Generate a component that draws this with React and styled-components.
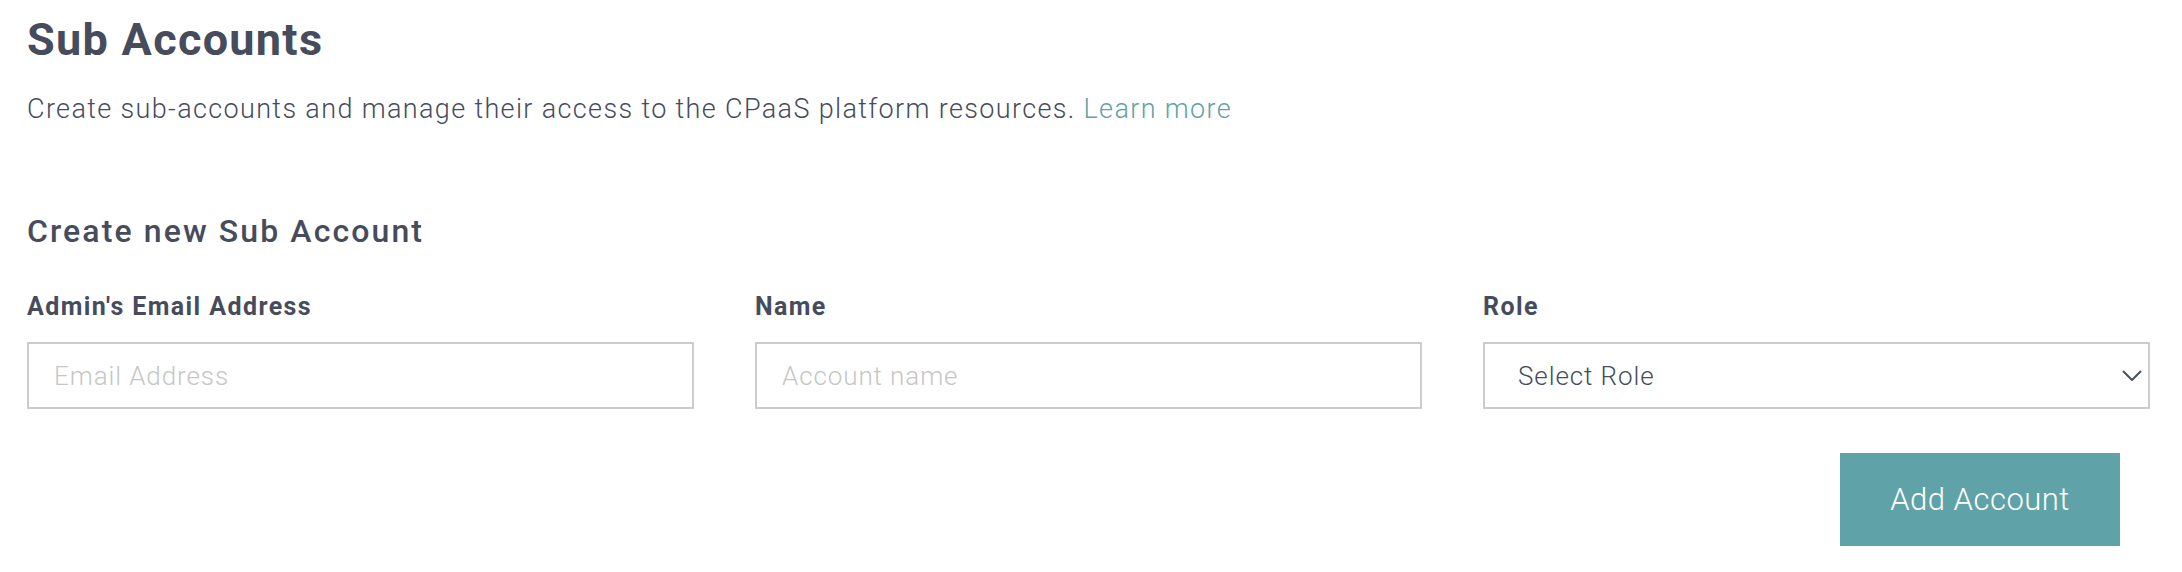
import React from "react";
import styled, { createGlobalStyle } from "styled-components";

const GlobalStyle = createGlobalStyle`
  html, body {
    margin: 0;
    padding: 0;
    background: #ffffff;
  }
  body {
    font-family: Roboto, "Liberation Sans", Arial, sans-serif;
    color: #464c5c;
  }
  * { box-sizing: border-box; }
`;

const Page = styled.main`
  padding: 14px 32px 0 27px;
`;

const Title = styled.h1`
  margin: 0;
  font-size: 45px;
  line-height: 52px;
  font-weight: 700;
  letter-spacing: 1.3px;
  color: #464c5c;
`;

const Intro = styled.p`
  margin: 27px 0 0;
  font-size: 27px;
  line-height: 32px;
  font-weight: 300;
  letter-spacing: 1.35px;
  color: #464c5c;
`;

const Link = styled.a`
  color: #5fa3a8;
  text-decoration: none;
`;

const SectionTitle = styled.h2`
  margin: 86px 0 0;
  font-size: 32px;
  line-height: 40px;
  font-weight: 500;
  letter-spacing: 2.1px;
  color: #464c5c;
`;

const Fields = styled.div`
  display: grid;
  grid-template-columns: repeat(3, 1fr);
  column-gap: 61px;
  margin-top: 41px;
`;

const Field = styled.label`
  display: flex;
  flex-direction: column;
  gap: 20px;
`;

const FieldLabel = styled.span`
  font-size: 25px;
  line-height: 30px;
  font-weight: 700;
  letter-spacing: 1.4px;
  color: #464c5c;
`;

const controlBase = `
  height: 67px;
  width: 100%;
  border: 2px solid #cccccc;
  border-radius: 0;
  font-family: Roboto, "Liberation Sans", Arial, sans-serif;
  font-size: 26px;
  font-weight: 300;
  letter-spacing: 0.9px;
  color: #464c5c;
  background: #fff;
  outline: none;
`;

const TextInput = styled.input`
  ${controlBase}
  padding: 0 25px;
  &::placeholder {
    color: #c6c6c6;
  }
`;

const SelectWrap = styled.div`
  position: relative;
  width: 100%;
`;

const Select = styled.select`
  ${controlBase}
  appearance: none;
  -webkit-appearance: none;
  padding: 0 40px 0 33px;
`;

const Chevron = styled.svg`
  position: absolute;
  right: 8px;
  top: 50%;
  transform: translateY(-50%);
  pointer-events: none;
`;

const Actions = styled.div`
  display: flex;
  justify-content: flex-end;
  margin-top: 44px;
  padding-right: 30px;
`;

const Button = styled.button`
  width: 280px;
  height: 93px;
  border: none;
  border-radius: 0;
  background: #5fa3a8;
  color: #ffffff;
  font-family: Roboto, "Liberation Sans", Arial, sans-serif;
  font-size: 31px;
  font-weight: 300;
  letter-spacing: 0.5px;
  cursor: pointer;
`;

export default function App() {
  return (
    <>
      <GlobalStyle />
      <Page>
        <Title>Sub Accounts</Title>
        <Intro>
          Create sub-accounts and manage their access to the CPaaS platform resources.{" "}
          <Link href="#">Learn more</Link>
        </Intro>
        <SectionTitle>Create new Sub Account</SectionTitle>
        <Fields>
          <Field>
            <FieldLabel>Admin's Email Address</FieldLabel>
            <TextInput type="email" placeholder="Email Address" />
          </Field>
          <Field>
            <FieldLabel>Name</FieldLabel>
            <TextInput type="text" placeholder="Account name" />
          </Field>
          <Field>
            <FieldLabel>Role</FieldLabel>
            <SelectWrap>
              <Select defaultValue="">
                <option value="">Select Role</option>
                <option value="admin">Admin</option>
                <option value="user">User</option>
              </Select>
              <Chevron width="20" height="12" viewBox="0 0 20 12" fill="none">
                <path d="M1.5 1.5 L10 10 L18.5 1.5" stroke="#4a5060" strokeWidth="2" strokeLinecap="round" strokeLinejoin="round" />
              </Chevron>
            </SelectWrap>
          </Field>
        </Fields>
        <Actions>
          <Button type="button">Add Account</Button>
        </Actions>
      </Page>
    </>
  );
}
